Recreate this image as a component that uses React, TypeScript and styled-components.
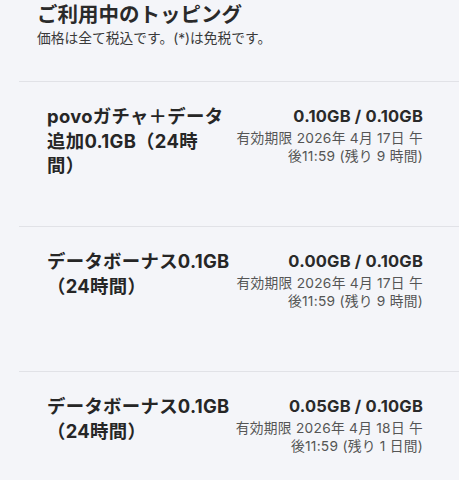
import React from "react";
import styled, { createGlobalStyle } from "styled-components";

const GlobalStyle = createGlobalStyle`
  html, body {
    margin: 0;
    padding: 0;
    background: #f4f5f9;
  }
  body {
    font-family: "Inter", "Noto Sans CJK JP", sans-serif;
    color: #262626;
    -webkit-font-smoothing: antialiased;
    text-spacing-trim: space-all;
  }
`;

type Topping = {
  id: number;
  name: string;
  used: string;
  total: string;
  expiry: string;
  remaining: string;
};

const toppings: Topping[] = [
  {
    id: 1,
    name: "povoガチャ＋データ追加0.1GB（24時間）",
    used: "0.10GB",
    total: "0.10GB",
    expiry: "2026年 4月 17日 午後11:59",
    remaining: "9 時間",
  },
  {
    id: 2,
    name: "データボーナス0.1GB（24時間）",
    used: "0.00GB",
    total: "0.10GB",
    expiry: "2026年 4月 17日 午後11:59",
    remaining: "9 時間",
  },
  {
    id: 3,
    name: "データボーナス0.1GB（24時間）",
    used: "0.05GB",
    total: "0.10GB",
    expiry: "2026年 4月 18日 午後11:59",
    remaining: "1 日間",
  },
];

const App = () => {
  return (
    <>
      <GlobalStyle />
      <Root>
        <Header>
          <Title>ご利用中のトッピング</Title>
          <Note>価格は全て税込です。(*)は免税です。</Note>
        </Header>
        <List>
          {toppings.map((t) => (
            <Item key={t.id}>
              <Name>{t.name}</Name>
              <Usage>
                <Amount>
                  {t.used} / {t.total}
                </Amount>
                <Expiry>
                  有効期限 {t.expiry} (残り {t.remaining})
                </Expiry>
              </Usage>
            </Item>
          ))}
        </List>
      </Root>
    </>
  );
};

export default App;

const Root = styled.div`
  display: flex;
  flex-direction: column;
  padding-left: 19px;
  min-height: 480px;
`;

const Header = styled.div`
  padding: 2px 0 0 18px;
  height: 81px;
  box-sizing: border-box;
`;

const Title = styled.h1`
  margin: 0;
  font-size: 20.5px;
  line-height: 26px;
  font-weight: 700;
  color: #2a2a2a;
`;

const Note = styled.p`
  margin: 1px 0 0;
  font-size: 13.75px;
  line-height: 18px;
  color: #3a3a3a;
`;

const List = styled.div`
  display: flex;
  flex-direction: column;
`;

const Item = styled.div`
  display: flex;
  justify-content: space-between;
  align-items: flex-start;
  height: 145px;
  box-sizing: border-box;
  border-top: 1.5px solid #e1e2e7;
  padding: 22px 36px 0 28px;
`;

const Name = styled.div`
  width: 186px;
  font-size: 18.4px;
  line-height: 24.5px;
  font-weight: 700;
  letter-spacing: 0.3px;
  text-spacing-trim: space-all;
  color: #262626;
`;

const Usage = styled.div`
  width: 190px;
  padding-top: 1px;
  text-align: right;
`;

const Amount = styled.div`
  font-size: 16.5px;
  line-height: 22px;
  font-weight: 700;
  letter-spacing: 0.2px;
  color: #2a2a2a;
`;

const Expiry = styled.div`
  margin-top: 3px;
  font-size: 13.75px;
  line-height: 17.5px;
  letter-spacing: 0.25px;
  color: #555;
`;
